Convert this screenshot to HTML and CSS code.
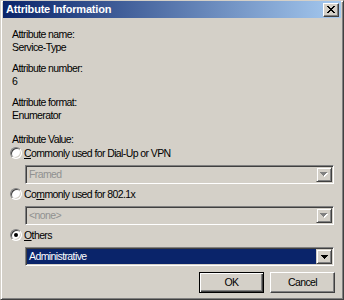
FILE: index.html
```html
<!DOCTYPE html>
<html lang="en">
<head>
    <meta charset="UTF-8">
    <title>Attribute Information</title>
    <link rel="stylesheet" href="styles.css">
</head>
<body>
    <div class="window">
        <div class="titlebar">
            <span class="title">Attribute Information</span>
            <span class="close">
                <svg width="8" height="7" viewBox="0 0 8 7">
                    <rect x="0" y="0" width="2" height="1"/><rect x="6" y="0" width="2" height="1"/>
                    <rect x="1" y="1" width="2" height="1"/><rect x="5" y="1" width="2" height="1"/>
                    <rect x="2" y="2" width="4" height="1"/>
                    <rect x="3" y="3" width="2" height="1"/>
                    <rect x="2" y="4" width="4" height="1"/>
                    <rect x="1" y="5" width="2" height="1"/><rect x="5" y="5" width="2" height="1"/>
                    <rect x="0" y="6" width="2" height="1"/><rect x="6" y="6" width="2" height="1"/>
                </svg>
            </span>
        </div>
        <div class="content">
            <div class="field">
                <div>Attribute name:</div>
                <div>Service-Type</div>
            </div>
            <div class="field">
                <div>Attribute number:</div>
                <div>6</div>
            </div>
            <div class="field">
                <div>Attribute format:</div>
                <div>Enumerator</div>
            </div>
            <div class="value-label">Attribute Value:</div>

            <div class="radio-row">
                <span class="radio"></span>
                <span><u>C</u>ommonly used for Dial-Up or VPN</span>
            </div>
            <div class="combo disabled">
                <span class="combo-text">Framed</span>
                <span class="combo-btn">
                    <svg width="8" height="5" viewBox="0 0 8 5">
                        <g fill="#fff" transform="translate(1 1)">
                            <rect x="0" y="0" width="7" height="1"/><rect x="1" y="1" width="5" height="1"/><rect x="2" y="2" width="3" height="1"/><rect x="3" y="3" width="1" height="1"/>
                        </g>
                        <g fill="#808080">
                            <rect x="0" y="0" width="7" height="1"/><rect x="1" y="1" width="5" height="1"/><rect x="2" y="2" width="3" height="1"/><rect x="3" y="3" width="1" height="1"/>
                        </g>
                    </svg>
                </span>
            </div>

            <div class="radio-row">
                <span class="radio"></span>
                <span>Co<u>m</u>monly used for 802.1x</span>
            </div>
            <div class="combo disabled">
                <span class="combo-text">&lt;none&gt;</span>
                <span class="combo-btn">
                    <svg width="8" height="5" viewBox="0 0 8 5">
                        <g fill="#fff" transform="translate(1 1)">
                            <rect x="0" y="0" width="7" height="1"/><rect x="1" y="1" width="5" height="1"/><rect x="2" y="2" width="3" height="1"/><rect x="3" y="3" width="1" height="1"/>
                        </g>
                        <g fill="#808080">
                            <rect x="0" y="0" width="7" height="1"/><rect x="1" y="1" width="5" height="1"/><rect x="2" y="2" width="3" height="1"/><rect x="3" y="3" width="1" height="1"/>
                        </g>
                    </svg>
                </span>
            </div>

            <div class="radio-row">
                <span class="radio"><span class="dot"></span></span>
                <span><u>O</u>thers</span>
            </div>
            <div class="combo">
                <span class="combo-text selected">Administrative</span>
                <span class="combo-btn">
                    <svg width="7" height="4" viewBox="0 0 7 4">
                        <rect x="0" y="0" width="7" height="1"/><rect x="1" y="1" width="5" height="1"/><rect x="2" y="2" width="3" height="1"/><rect x="3" y="3" width="1" height="1"/>
                    </svg>
                </span>
            </div>

            <div class="actions">
                <span class="btn btn-default">OK</span>
                <span class="btn">Cancel</span>
            </div>
        </div>
    </div>
</body>
</html>
```

FILE: styles.css
```css
*{
    margin:0;
    padding:0;
    box-sizing:border-box;
}
body{
    width:344px;
    height:300px;
    overflow:hidden;
    background:#d4d0c8;
    color:#000;
    font-family:"Liberation Sans", Arial, sans-serif;
    font-size:10.5px;
    letter-spacing:-0.6px;
    line-height:13px;
}
.window{
    width:344px;
    height:300px;
    display:flex;
    flex-direction:column;
    padding:0 2px 2px 2px;
    border:1px solid;
    border-color:#d4d0c8 #404040 #404040 #d4d0c8;
    box-shadow:inset 1px 1px #fff, inset -1px -1px #808080;
}
.titlebar{
    height:17px;
    display:flex;
    align-items:center;
    justify-content:space-between;
    padding:0 2px 0 3px;
    background:linear-gradient(to right, #0a246a, #a6caf0);
    color:#fff;
    font-weight:bold;
    font-size:11px;
    letter-spacing:-0.2px;
}
.close{
    width:16px;
    height:14px;
    display:flex;
    align-items:center;
    justify-content:center;
    background:#d4d0c8;
    border:1px solid;
    border-color:#fff #404040 #404040 #fff;
    box-shadow:inset -1px -1px #808080;
}
.close svg{
    display:block;
    fill:#000;
}
.content{
    flex:1;
    display:flex;
    flex-direction:column;
    padding:10px 6px 0 9px;
}
.field{
    margin-bottom:8px;
}
.value-label{
    margin-top:3px;
}
.radio-row{
    height:14px;
    display:flex;
    align-items:center;
    gap:2px;
    margin-left:-2px;
}
.radio{
    width:12px;
    height:12px;
    display:flex;
    align-items:center;
    justify-content:center;
    border-radius:50%;
    background:#fff;
    border:1px solid;
    border-color:#808080 #fff #fff #808080;
    box-shadow:inset 1px 1px #404040, inset -1px -1px #d4d0c8;
}
.dot{
    width:4px;
    height:4px;
    border-radius:50%;
    background:#000;
}
.combo{
    height:19px;
    display:flex;
    margin:5px 1px 3px 13px;
    padding:1px;
    background:#fff;
    border:1px solid;
    border-color:#808080 #fff #fff #808080;
    box-shadow:inset 1px 1px #404040, inset -1px -1px #d4d0c8;
}
.combo.disabled{
    background:#d4d0c8;
    color:#909090;
}
.combo-text{
    flex:1;
    padding-left:2px;
    line-height:15px;
}
.combo-text.selected{
    background:#0a246a;
    color:#fff;
}
.combo-btn{
    width:16px;
    height:15px;
    display:flex;
    align-items:center;
    justify-content:center;
    background:#d4d0c8;
    border:1px solid;
    border-color:#d4d0c8 #404040 #404040 #d4d0c8;
    box-shadow:inset 1px 1px #fff, inset -1px -1px #808080;
}
.combo-btn svg{
    display:block;
}
.actions{
    display:flex;
    justify-content:flex-end;
    gap:6px;
    margin-top:3px;
}
.btn{
    width:65px;
    height:21px;
    display:flex;
    align-items:center;
    justify-content:center;
    background:#d4d0c8;
    border:1px solid;
    border-color:#fff #404040 #404040 #fff;
    box-shadow:inset -1px -1px #808080;
}
.btn-default{
    border:1px solid #000;
    box-shadow:inset 1px 1px #fff, inset -1px -1px #404040, inset -2px -2px #808080;
}
```
